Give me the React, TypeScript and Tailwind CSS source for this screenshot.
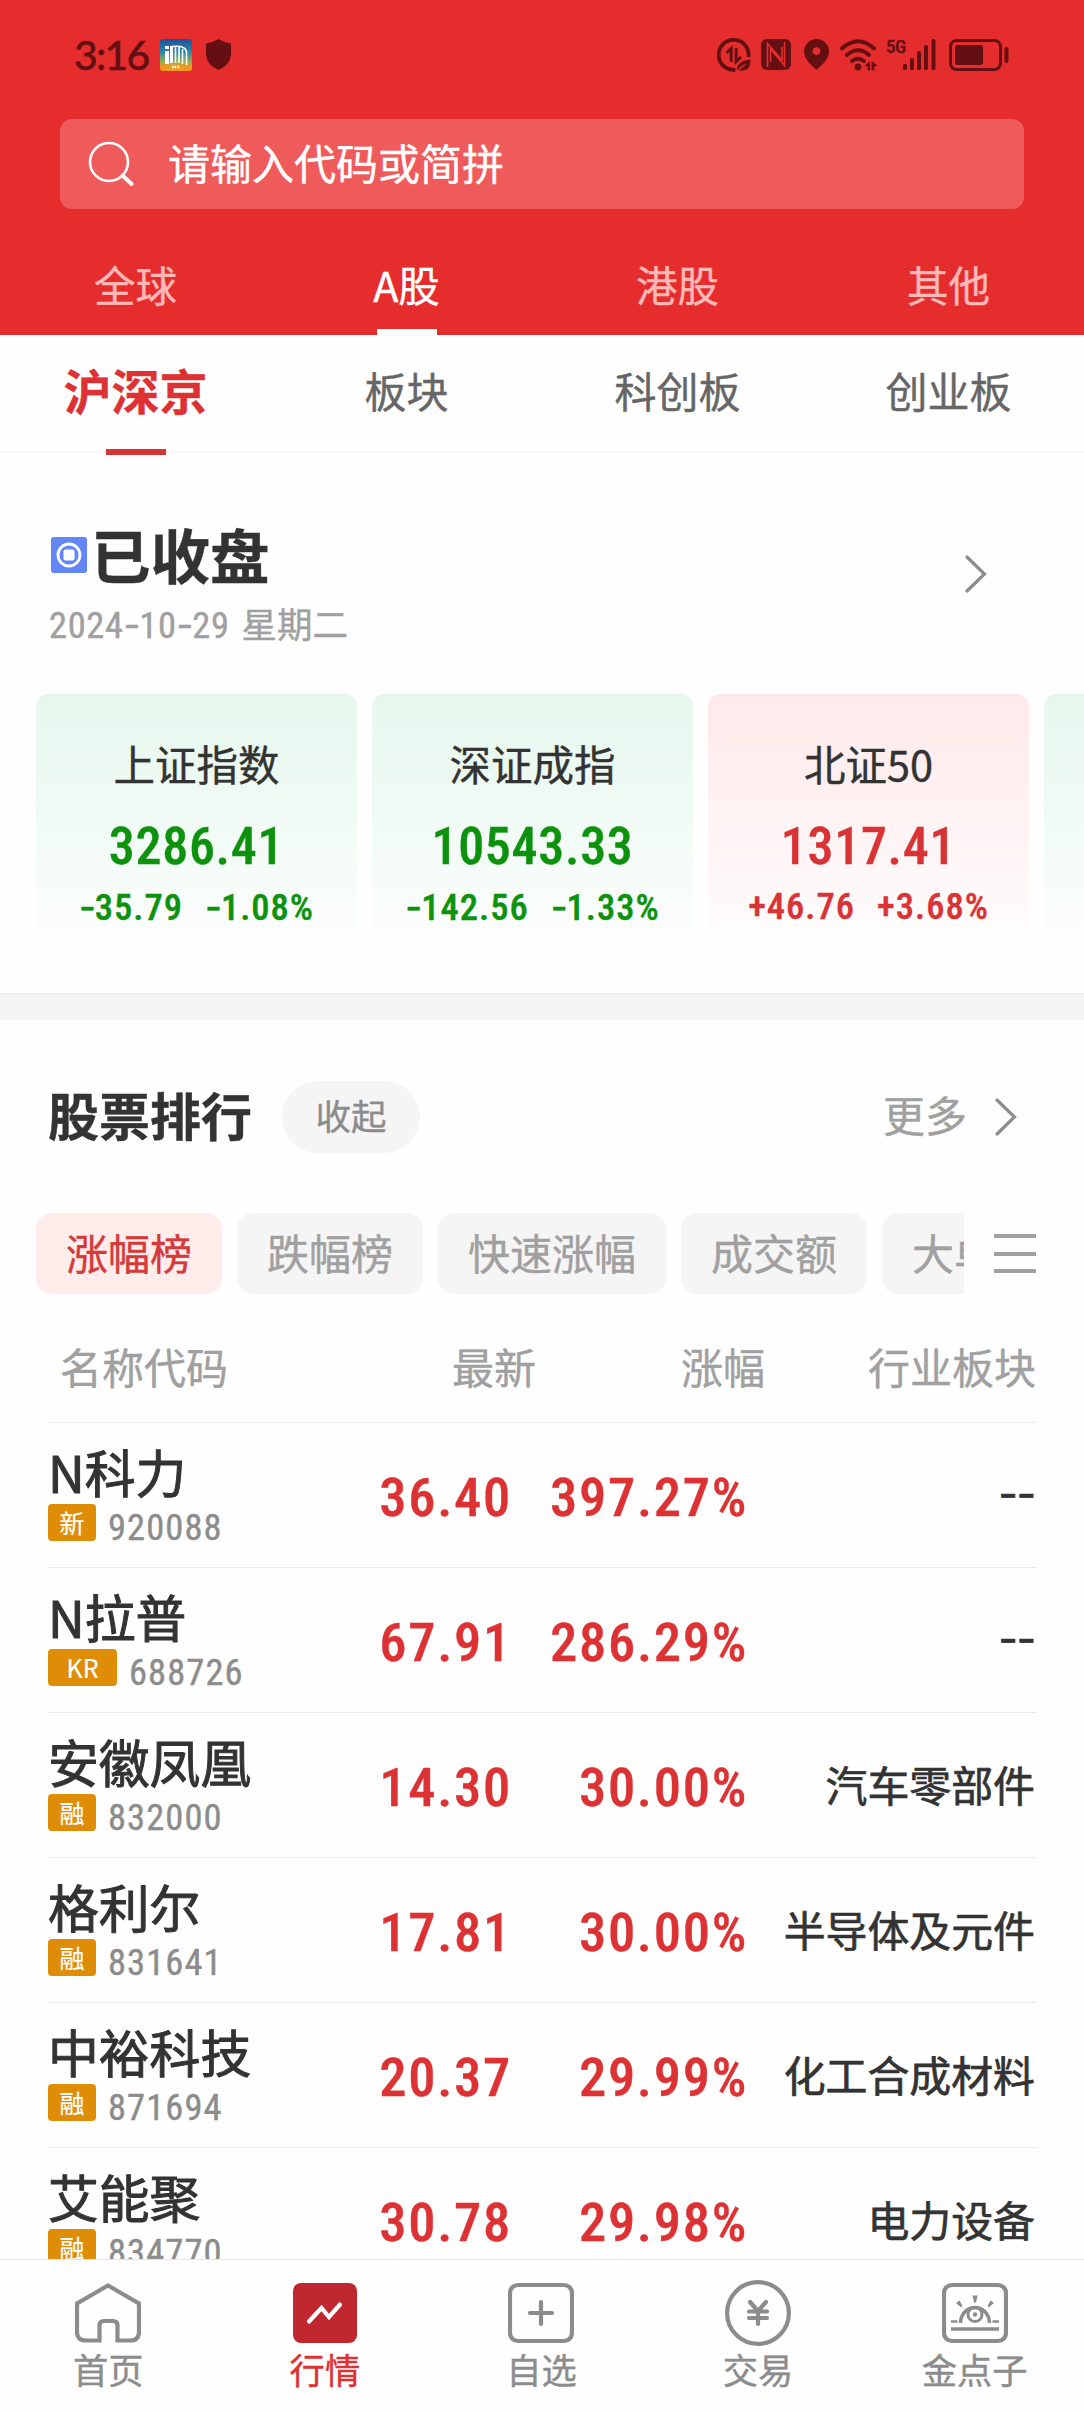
import clsx from 'clsx';

type IndexItem = {
  name: string;
  value: string;
  change: string;
  percent: string;
  up: boolean;
};

type StockItem = {
  name: string;
  tag: string;
  code: string;
  price: string;
  percent: string;
  industry: string;
};

const marketTabs = ['全球', 'A股', '港股', '其他'];
const boardTabs = ['沪深京', '板块', '科创板', '创业板'];
const rankTabs = ['涨幅榜', '跌幅榜', '快速涨幅', '成交额', '大单净量'];

const indexes: IndexItem[] = [
  { name: '上证指数', value: '3286.41', change: '-35.79', percent: '-1.08%', up: false },
  { name: '深证成指', value: '10543.33', change: '-142.56', percent: '-1.33%', up: false },
  { name: '北证50', value: '1317.41', change: '+46.76', percent: '+3.68%', up: true },
];

const stocks: StockItem[] = [
  { name: 'N科力', tag: '新', code: '920088', price: '36.40', percent: '397.27%', industry: '--' },
  { name: 'N拉普', tag: 'KR', code: '688726', price: '67.91', percent: '286.29%', industry: '--' },
  { name: '安徽凤凰', tag: '融', code: '832000', price: '14.30', percent: '30.00%', industry: '汽车零部件' },
  { name: '格利尔', tag: '融', code: '831641', price: '17.81', percent: '30.00%', industry: '半导体及元件' },
  { name: '中裕科技', tag: '融', code: '871694', price: '20.37', percent: '29.99%', industry: '化工合成材料' },
  { name: '艾能聚', tag: '融', code: '834770', price: '30.78', percent: '29.98%', industry: '电力设备' },
];

// Roboto Condensed has a very short hyphen, so hyphens are set in Inter
function Digits({ text }: { text: string }) {
  return (
    <>
      {text.split('').map((char, index) =>
        char === '-' ? (
          <span key={index} className="font-['Inter',sans-serif] tracking-[-1px]">
            {char}
          </span>
        ) : (
          char
        ),
      )}
    </>
  );
}

function StatusBar() {
  return (
    <div className="flex h-[109px] items-center pl-[74px] pr-[75px] text-[#641013]">
      <span className="w-[86px] whitespace-nowrap font-['Lato',sans-serif] text-[41px] font-medium leading-[44px] tracking-[-1.800px]">
        3:16
      </span>
      <svg width="32" height="32" viewBox="0 0 32 32">
        <defs>
          <linearGradient id="app-icon" x1="0" y1="0" x2="0" y2="1">
            <stop offset="0" stopColor="#1d4f9c" />
            <stop offset="0.4" stopColor="#2d86a8" />
            <stop offset="0.7" stopColor="#8fae55" />
            <stop offset="0.85" stopColor="#f09a20" />
          </linearGradient>
        </defs>
        <rect width="32" height="32" rx="3" fill="url(#app-icon)" />
        <path d="M5 7h4v3H5zM5 12h4v13H5zM10 7h3v17h-3z" fill="#fff" />
        <path
          d="M12 7.5q13-1.500 14.500 5V26M15.500 8v16M19 8v16M22.500 10v15"
          stroke="#fff"
          strokeWidth="1.6"
          fill="none"
        />
        <path d="M12 28h8" stroke="#fff" strokeWidth="2.500" strokeDasharray="1.500 1" />
      </svg>
      <svg className="ml-[14px]" width="25" height="31" viewBox="0 0 25 31">
        <path
          d="M12.500 0Q18 3.500 25 4.500V16Q24 26 12.500 31Q1 26 0 16V4.500Q7 3.500 12.500 0Z"
          fill="currentColor"
        />
      </svg>

      <div className="ml-auto flex items-center">
        <svg width="34" height="34" viewBox="0 0 34 34" fill="none" stroke="currentColor">
          <path d="M18.500 31.700A15 15 0 1 1 31.500 19" strokeWidth="3.800" />
          <path d="M14.200 24V10.500L9.500 15M19.200 10v13.500L24 19" strokeWidth="3" />
          <path d="M20 33q-1-10 13.500-11.500Q34 34 23 32.500z" fill="currentColor" stroke="none" />
          <path d="M20 33l8-6.500" stroke="#e62d2e" strokeWidth="1.300" />
        </svg>
        <svg className="ml-2.5" width="30" height="31" viewBox="0 0 30 31">
          <rect width="30" height="31" rx="6" fill="currentColor" />
          <path
            d="M6.500 28V4.500L21 21V8M23.500 3v23.500L9.500 10v13"
            fill="none"
            stroke="#e62d2e"
            strokeWidth="1.600"
          />
        </svg>
        <svg className="ml-[13px]" width="25" height="31" viewBox="0 0 25 31">
          <path
            fillRule="evenodd"
            d="M12.500 0a12.500 12.500 0 0 1 12.500 12.500C25 20 18 26 12.500 31C7 26 0 20 0 12.500A12.500 12.500 0 0 1 12.500 0zM12.500 8.300a3.800 3.800 0 1 0 0 7.600a3.800 3.800 0 0 0 0-7.600z"
            fill="currentColor"
          />
        </svg>
        <svg className="ml-[11px]" width="39" height="32" viewBox="0 0 39 32" fill="none">
          <path
            d="M2 9.500Q18 -5 34 9.500M7 16Q18 6.500 29 16M12 22Q18 17.500 24 22"
            stroke="currentColor"
            strokeWidth="3.800"
            strokeLinecap="round"
          />
          <circle cx="18" cy="28" r="3.400" fill="currentColor" />
          <path d="M30 22v9.500h-2.500V27h-3zM31.500 22l6.500 5h-3.500v4.500h-3z" fill="currentColor" />
        </svg>
        <span className="ml-[7px] h-[32px] w-[17px] font-['Roboto_Condensed',sans-serif] text-[19px] font-medium leading-[16px] tracking-[-0.5px]">
          5G
        </span>
        <svg width="33" height="31" viewBox="0 0 33 31" fill="currentColor">
          <rect x="0" y="25" width="4" height="6" rx="1.500" />
          <rect x="7" y="19" width="4" height="12" rx="1.500" />
          <rect x="14" y="12" width="4" height="19" rx="1.500" />
          <rect x="21" y="6" width="4" height="25" rx="1.500" />
          <rect x="28.500" y="0" width="4" height="31" rx="1.500" />
        </svg>
        <svg className="ml-[13px]" width="60" height="32" viewBox="0 0 60 32">
          <rect x="1.500" y="1.500" width="50" height="29" rx="6" fill="none" stroke="currentColor" strokeWidth="3" />
          <rect x="6" y="6" width="28" height="20" rx="2.500" fill="currentColor" />
          <rect x="55.500" y="8" width="4" height="16" rx="2" fill="currentColor" />
        </svg>
      </div>
    </div>
  );
}

function ChevronRight() {
  return (
    <svg width="22" height="38" viewBox="0 0 22 38" fill="none">
      <path d="M2 2l17.500 17L2 36" stroke="#8c8c8c" strokeWidth="3.200" strokeLinecap="round" />
    </svg>
  );
}

function Header() {
  return (
    <div className="h-[335px] shrink-0 bg-[#e62d2e]">
      <StatusBar />
      <div className="mx-[60px] mt-2.5 flex h-[90px] items-center rounded-[12px] bg-[#ef5b5a] pl-[28px]">
        <svg width="46" height="46" viewBox="0 0 46 46" fill="none" stroke="#fff">
          <circle cx="21" cy="21" r="19" strokeWidth="2.600" />
          <path d="M34.500 34.500l9 8.500" strokeWidth="4" strokeLinecap="round" />
        </svg>
        <span className="ml-[34px] pb-1 text-[42px] leading-[60px] text-white">
          请输入代码或简拼
        </span>
      </div>
      <div className="grid h-[126px] grid-cols-4 pt-[24px]">
        {marketTabs.map((tab) => (
          <div
            key={tab}
            className={clsx(
              'relative flex items-center justify-center text-[41.5px]',
              tab === 'A股' ? 'text-white' : 'text-[#ffb9b7]',
            )}
          >
            {tab}
            {tab === 'A股' && (
              <span className="absolute bottom-0 h-[6px] w-[60px] bg-white"></span>
            )}
          </div>
        ))}
      </div>
    </div>
  );
}

function BoardTabs() {
  return (
    <div className="grid h-[118px] shrink-0 grid-cols-4 border-b-2 border-[#f7f7f7]">
      {boardTabs.map((tab, index) => (
        <div
          key={tab}
          className={clsx(
            'relative flex items-center justify-center',
            index === 0
              ? 'pb-[9px] text-[48px] font-bold text-[#dc3234]'
              : 'pb-[7px] text-[42px] text-[#666666]',
          )}
        >
          {tab}
          {index === 0 && (
            <span className="absolute -bottom-1 h-[6px] w-[60px] bg-[#d43538]"></span>
          )}
        </div>
      ))}
    </div>
  );
}

function MarketStatus() {
  return (
    <div className="flex h-[241px] shrink-0 items-start justify-between pl-[49px] pr-[97px] pt-[65px]">
      <div>
        <div className="flex items-center">
          <svg className="mt-1 ml-0.5" width="36" height="36" viewBox="0 0 36 36">
            <rect width="36" height="36" rx="3" fill="#6286f5" />
            <circle cx="18" cy="18" r="11" fill="none" stroke="#fff" strokeWidth="2.800" />
            <rect x="12.500" y="12.500" width="11" height="11" rx="2" fill="#fff" />
          </svg>
          <h1 className="ml-1 text-[59.5px] font-bold leading-[70px] text-[#333333]">已收盘</h1>
        </div>
        <p className="mt-[10px] whitespace-nowrap text-[35.5px] leading-[50px] text-[#a0a0a0]">
          <span className="mr-[12px] font-['Roboto_Condensed',sans-serif] text-[36.5px] tracking-[0.600px]">
            <Digits text="2024-10-29" />
          </span>
          星期二
        </p>
      </div>
      <div className="mt-[37px]">
        <ChevronRight />
      </div>
    </div>
  );
}

function IndexCard({ item }: { item: IndexItem }) {
  return (
    <div
      className={clsx(
        'flex h-[266px] w-[321px] shrink-0 flex-col items-center rounded-[12px] bg-linear-to-b pt-[44px]',
        item.up
          ? 'from-[#fee9ea] to-[#fefefe] text-[#d93336]'
          : 'from-[#e5f7ed] to-[#fefefe] text-[#0d920d]',
      )}
    >
      <p className="text-[41.5px] leading-[50px] text-[#333333]">{item.name}</p>
      <p className="mt-[29px] font-['Roboto_Condensed',sans-serif] text-[52px] font-medium leading-[60px] tracking-[0.700px]">
        {item.value}
      </p>
      <p className="mt-[10px] flex gap-[22px] whitespace-nowrap font-['Roboto_Condensed',sans-serif] text-[36.5px] font-medium leading-[40px] tracking-[1px]">
        <span>
          <Digits text={item.change} />
        </span>
        <span>
          <Digits text={item.percent} />
        </span>
      </p>
    </div>
  );
}

function RankHeader() {
  return (
    <div className="flex h-[193px] shrink-0 items-center pl-[48px] pr-[67px]">
      <h2 className="pb-1.5 text-[51px] font-bold leading-[70px] text-[#333333]">股票排行</h2>
      <button className="ml-[30px] flex h-[72px] w-[138px] items-center justify-center rounded-full bg-[#f5f5f5] pb-1 text-[35.5px] text-[#8c8c8c]">
        收起
      </button>
      <div className="ml-auto flex items-center gap-[28px]">
        <span className="pb-1.5 text-[42px] text-[#a0a0a0]">更多</span>
        <ChevronRight />
      </div>
    </div>
  );
}

function RankTabs() {
  return (
    <div className="flex h-[81px] shrink-0 items-center pl-9 pr-[48px]">
      <div className="flex w-[928px] gap-[15px] overflow-hidden">
        {rankTabs.map((tab, index) => (
          <div
            key={tab}
            className={clsx(
              'flex h-[81px] shrink-0 items-center rounded-[16px] px-[30px] pb-1 text-[42px]',
              index === 0 ? 'bg-[#ffeceb] text-[#d43a3a]' : 'bg-[#f5f5f5] text-[#a0a0a0]',
            )}
          >
            {tab}
          </div>
        ))}
      </div>
      <div className="ml-auto flex h-[39px] w-[42px] flex-col justify-between">
        <span className="h-[4px] bg-[#a0a0a0]"></span>
        <span className="h-[4px] bg-[#a0a0a0]"></span>
        <span className="h-[4px] bg-[#a0a0a0]"></span>
      </div>
    </div>
  );
}

function StockRow({ stock }: { stock: StockItem }) {
  return (
    <div className="mx-[48px] grid h-[145px] shrink-0 grid-cols-[250px_214px_236px_288px] border-t border-[#ebebeb]">
      <div className="whitespace-nowrap pt-[18px]">
        <p className="text-[50.8px] leading-[60px] text-[#333333] [-webkit-text-stroke:1px_#333333]">
          {stock.name}
        </p>
        <div className="mt-[3px] flex h-[37px]">
          <span
            className={clsx(
              'flex items-center justify-center rounded-[4px] bg-[#df8d06] pb-0.5 text-[25px] leading-[30px] text-white [-webkit-text-stroke:0.2px]',
              stock.tag === 'KR' ? 'w-[69px]' : 'w-[48px]',
            )}
          >
            {stock.tag}
          </span>
          <span className="ml-[12px] mt-[6px] font-['Roboto_Condensed',sans-serif] text-[36.5px] leading-[36px] tracking-[1.100px] text-[#8c8c8c]">
            {stock.code}
          </span>
        </div>
      </div>
      <div className="flex items-center justify-end pt-1.5 font-['Roboto_Condensed',sans-serif] text-[54.5px] font-medium tracking-[1.700px] text-[#dc3234]">
        {stock.price}
      </div>
      <div className="flex items-center justify-end pt-1.5 font-['Roboto_Condensed',sans-serif] text-[54.5px] font-medium tracking-[1.700px] text-[#dc3234]">
        {stock.percent}
      </div>
      <div className="flex items-center justify-end whitespace-nowrap pr-px pb-0.5 text-[41.9px] text-[#333333] [-webkit-text-stroke:0.7px_#333333]">
        <Digits text={stock.industry} />
      </div>
    </div>
  );
}

function StockTable() {
  return (
    <>
      <div className="mx-[48px] grid h-[128px] shrink-0 grid-cols-[260px_228px_229px_271px] items-center pt-[14px] text-[42px] text-[#a0a0a0]">
        <span className="pl-3">名称代码</span>
        <span className="text-right">最新</span>
        <span className="text-right">涨幅</span>
        <span className="text-right">行业板块</span>
      </div>
      {stocks.map((stock) => (
        <StockRow key={stock.code} stock={stock} />
      ))}
    </>
  );
}

const navItems = [
  {
    label: '首页',
    icon: (
      <path d="M33 5.500L64 23.500V52q0 8.500-9 8.500H42.500V45.500q0-4.500-4.500-4.500H29q-4.500 0-4.500 4.500v15H11Q2 60.500 2 52V23.500z" />
    ),
  },
  {
    label: '行情',
    icon: (
      <>
        <rect x="1" y="3" width="64" height="60" rx="8" fill="#c0272f" stroke="none" />
        <path d="M17 41.500l12.500-13.500 7.500 9L48 24.500" stroke="#fff" strokeLinecap="round" />
      </>
    ),
  },
  {
    label: '自选',
    icon: (
      <>
        <rect x="2" y="5" width="62" height="56" rx="8" />
        <path d="M22 33h22M33 22v22" strokeLinecap="round" />
      </>
    ),
  },
  {
    label: '交易',
    icon: (
      <>
        <circle cx="33" cy="33" r="30.900" />
        <path d="M25 22l8 9 8-9M24 31.500h18M24 38h18M33 31v13" strokeLinecap="round" />
      </>
    ),
  },
  {
    label: '金点子',
    icon: (
      <>
        <rect x="2" y="5" width="62" height="56" rx="8" />
        <path d="M9 49h48" strokeWidth="3.500" />
        <path d="M18.500 43a14 15 0 0 1 29 0" strokeWidth="3.500" />
        <circle cx="33" cy="34.500" r="7" strokeWidth="3" />
        <circle cx="33" cy="34.500" r="2.200" fill="#8c8c8c" stroke="none" />
        <path d="M9 41.500h6.500M50.500 41.500H57" strokeWidth="2.500" />
        <path
          d="M30.500 15.500h5l-1.500 7h-2zM14 23l3.500-2.500 3 5.500-1.500 1.200zM52 23l-3.500-2.500-3 5.500 1.500 1.200z"
          fill="#8c8c8c"
          stroke="none"
        />
      </>
    ),
  },
];

function BottomNav() {
  return (
    <nav className="grid h-[153px] shrink-0 grid-cols-5 border-t border-[#e6e6e6] bg-[#fefefe] pr-px pt-5">
      {navItems.map((item) => (
        <div key={item.label} className="flex flex-col items-center">
          <svg width="66" height="66" viewBox="0 0 66 66" fill="none" stroke="#8c8c8c" strokeWidth="4.200">
            {item.icon}
          </svg>
          <span
            className={clsx(
              'mt-[3px] text-[35.3px] leading-[40px]',
              item.label === '行情' ? 'text-[#dc3234]' : 'text-[#8c8c8c]',
            )}
          >
            {item.label}
          </span>
        </div>
      ))}
    </nav>
  );
}

export default function App() {
  return (
    <div className="flex h-[2412px] w-[1084px] flex-col overflow-hidden bg-[#fefefe] font-['Noto_Sans_CJK_SC',sans-serif] [-webkit-text-stroke:0.4px]">
      <Header />
      <main className="flex flex-1 flex-col overflow-hidden">
        <BoardTabs />
        <MarketStatus />
        <div className="flex h-[299px] shrink-0 gap-[15px] overflow-hidden pl-9">
          {indexes.map((item) => (
            <IndexCard key={item.name} item={item} />
          ))}
          <div className="h-[266px] w-[321px] shrink-0 rounded-[12px] bg-linear-to-b from-[#e5f7ed] to-[#fefefe]"></div>
        </div>
        <div className="h-[27px] shrink-0 border-t-2 border-[#ececec] bg-[#f5f5f5]"></div>
        <RankHeader />
        <RankTabs />
        <StockTable />
      </main>
      <BottomNav />
    </div>
  );
}
